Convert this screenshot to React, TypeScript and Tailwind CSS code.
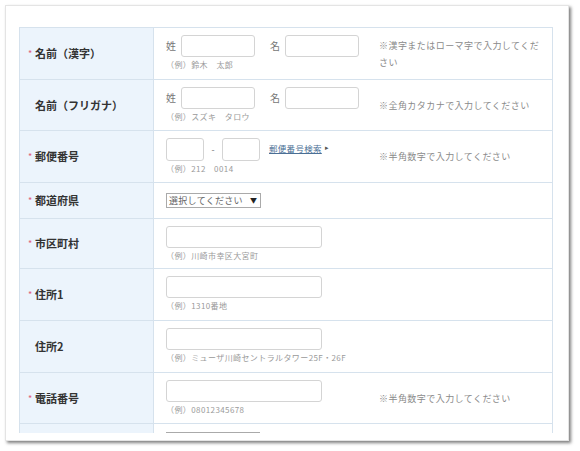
import React from "react";

const FONT = '"Noto Sans CJK JP", "Noto Sans", "Liberation Sans", sans-serif';

function Label({ text, req, h }: { text: string; req?: boolean; h: string }) {
  return (
    <div className={`flex items-center bg-[#ecf4fc] border-r border-[#d6e2ed] pl-[8px] ${h}`}>
      <span className={`w-[7px] text-[9px] text-[#e0607a] leading-none ${req ? "" : "invisible"}`}>*</span>
      <span className="text-[11px] font-bold text-[#333] leading-none">{text}</span>
    </div>
  );
}

function Input({ w }: { w: string }) {
  return <div className={`h-[22px] ${w} border border-[#d4d4d4] rounded-[3px] bg-white`} />;
}

function Example({ text }: { text: string }) {
  return (
    <div className="mt-[3px] text-[8px] leading-[10px] text-[#9a9a9a] tracking-[0.4px]">{text}</div>
  );
}

function Note({ text }: { text: string }) {
  return (
    <div className="w-[162px] text-[9px] leading-[17px] tracking-[0.45px] text-[#8a8a8a]">{text}</div>
  );
}

function Row({
  label,
  req,
  h,
  children,
  note,
  center,
}: {
  label: string;
  req?: boolean;
  h: string;
  children: React.ReactNode;
  note?: string;
  center?: boolean;
}) {
  return (
    <div className="grid grid-cols-[134px_1fr] border-t border-[#d6e2ed]">
      <Label text={label} req={req} h={h} />
      <div className={`flex ${h}`}>
        <div className={`w-[225px] pl-[12px] ${center ? "flex items-center" : "pt-[7px]"}`}>{children}</div>
        <div className="flex items-center">{note ? <Note text={note} /> : null}</div>
      </div>
    </div>
  );
}

function NamePair() {
  return (
    <div className="flex items-center">
      <span className="text-[10px] text-[#777] w-[15px] leading-none">姓</span>
      <Input w="w-[74px]" />
      <span className="text-[10px] text-[#777] ml-[15px] w-[15px] leading-none">名</span>
      <Input w="w-[74px]" />
    </div>
  );
}

export default function App() {
  return (
    <div className="w-[580px] h-[451px] bg-white pt-[5px] pl-[5px]" style={{ fontFamily: FONT }}>
      <div className="w-[564px] h-[436px] bg-white border border-[#e4e4e4] shadow-[2px_2px_3px_rgba(0,0,0,0.5)] pt-[21px] pl-[13px] pr-[15px] pb-[7px]">
        <div className="h-full overflow-hidden border-l border-r border-[#d6e2ed]">
          <Row label="名前（漢字）" req h="h-[51px]" note="※漢字またはローマ字で入力してください">
            <NamePair />
            <Example text="（例）鈴木　太郎" />
          </Row>
          <Row label="名前（フリガナ）" h="h-[50px]" note="※全角カタカナで入力してください">
            <NamePair />
            <Example text="（例）スズキ　タロウ" />
          </Row>
          <Row label="郵便番号" req h="h-[51px]" note="※半角数字で入力してください">
            <div className="flex items-center">
              <div className="h-[23px] w-[38px] border border-[#d4d4d4] rounded-[3px]" />
              <span className="text-[9px] text-[#777] w-[18px] text-center">-</span>
              <div className="h-[23px] w-[38px] border border-[#d4d4d4] rounded-[3px]" />
              <span className="ml-[9px] text-[8.5px] text-[#4a6f95] underline tracking-[0.3px] self-start mt-[4px]">郵便番号検索</span>
              <span className="ml-[3px] text-[7px] text-[#555] self-start mt-[4px]">▸</span>
            </div>
            <Example text="（例）212　0014" />
          </Row>
          <Row label="都道府県" req h="h-[35px]" center>
            <div className="h-[15px] w-[95px] border border-[#aaa] bg-white flex items-center pl-[2px] text-[9px] text-[#666] leading-none">
              <span className="tracking-[0.3px]">選択してください</span>
              <span className="ml-[7px] text-[7px] text-[#222]">▼</span>
            </div>
          </Row>
          <Row label="市区町村" req h="h-[49px]">
            <Input w="w-[156px]" />
            <Example text="（例）川崎市幸区大宮町" />
          </Row>
          <Row label="住所1" req h="h-[51px]">
            <Input w="w-[156px]" />
            <Example text="（例）1310番地" />
          </Row>
          <Row label="住所2" h="h-[51px]">
            <Input w="w-[156px]" />
            <Example text="（例）ミューザ川崎セントラルタワー25F・26F" />
          </Row>
          <Row label="電話番号" req h="h-[50px]" note="※半角数字で入力してください">
            <Input w="w-[156px]" />
            <Example text="（例）08012345678" />
          </Row>
          <Row label="" h="h-[40px]">
            <div className="mt-[1px] h-[15px] w-[94px] border border-[#aaa] bg-white" />
          </Row>
        </div>
      </div>
    </div>
  );
}
